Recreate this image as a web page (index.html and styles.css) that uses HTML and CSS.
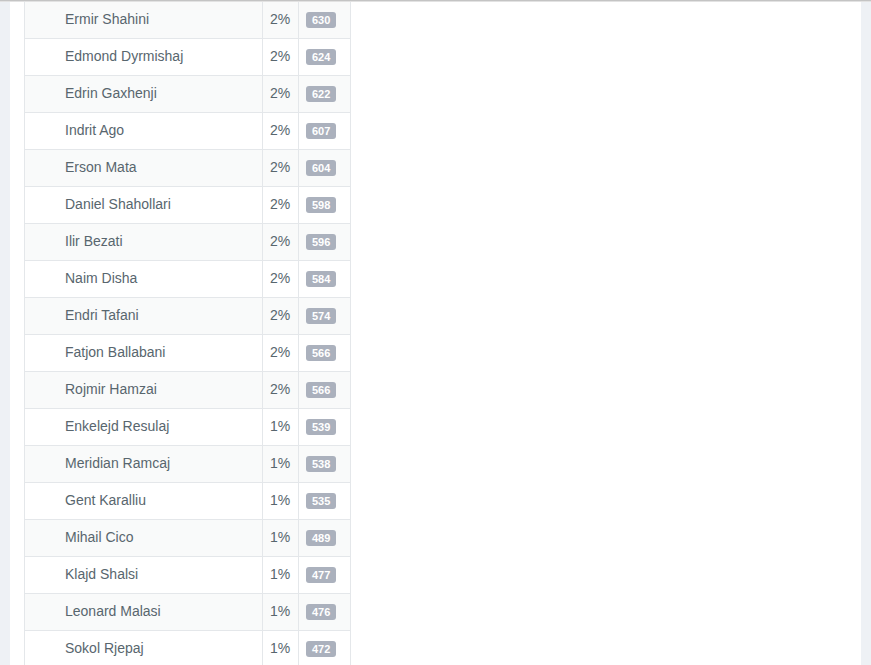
FILE: index.html
```html
<!DOCTYPE html>
<html>
<head>
<meta charset="utf-8">
<link rel="stylesheet" href="styles.css">
</head>
<body>
<div class="topline"></div>
<div class="page">
  <div class="panel">
    <table class="rank">
      <tbody>
        <tr><td class="name">Ermir Shahini</td><td class="pct">2%</td><td class="cnt"><span class="badge">630</span></td></tr>
        <tr><td class="name">Edmond Dyrmishaj</td><td class="pct">2%</td><td class="cnt"><span class="badge">624</span></td></tr>
        <tr><td class="name">Edrin Gaxhenji</td><td class="pct">2%</td><td class="cnt"><span class="badge">622</span></td></tr>
        <tr><td class="name">Indrit Ago</td><td class="pct">2%</td><td class="cnt"><span class="badge">607</span></td></tr>
        <tr><td class="name">Erson Mata</td><td class="pct">2%</td><td class="cnt"><span class="badge">604</span></td></tr>
        <tr><td class="name">Daniel Shahollari</td><td class="pct">2%</td><td class="cnt"><span class="badge">598</span></td></tr>
        <tr><td class="name">Ilir Bezati</td><td class="pct">2%</td><td class="cnt"><span class="badge">596</span></td></tr>
        <tr><td class="name">Naim Disha</td><td class="pct">2%</td><td class="cnt"><span class="badge">584</span></td></tr>
        <tr><td class="name">Endri Tafani</td><td class="pct">2%</td><td class="cnt"><span class="badge">574</span></td></tr>
        <tr><td class="name">Fatjon Ballabani</td><td class="pct">2%</td><td class="cnt"><span class="badge">566</span></td></tr>
        <tr><td class="name">Rojmir Hamzai</td><td class="pct">2%</td><td class="cnt"><span class="badge">566</span></td></tr>
        <tr><td class="name">Enkelejd Resulaj</td><td class="pct">1%</td><td class="cnt"><span class="badge">539</span></td></tr>
        <tr><td class="name">Meridian Ramcaj</td><td class="pct">1%</td><td class="cnt"><span class="badge">538</span></td></tr>
        <tr><td class="name">Gent Karalliu</td><td class="pct">1%</td><td class="cnt"><span class="badge">535</span></td></tr>
        <tr><td class="name">Mihail Cico</td><td class="pct">1%</td><td class="cnt"><span class="badge">489</span></td></tr>
        <tr><td class="name">Klajd Shalsi</td><td class="pct">1%</td><td class="cnt"><span class="badge">477</span></td></tr>
        <tr><td class="name">Leonard Malasi</td><td class="pct">1%</td><td class="cnt"><span class="badge">476</span></td></tr>
        <tr><td class="name">Sokol Rjepaj</td><td class="pct">1%</td><td class="cnt"><span class="badge">472</span></td></tr>
      </tbody>
    </table>
  </div>
</div>
</body>
</html>
```
FILE: styles.css
```css
html, body {
  margin: 0;
  padding: 0;
  background: #eef1f5;
  overflow: hidden;
  height: 665px;
}
body {
  font-family: "Liberation Sans", Arial, sans-serif;
  font-size: 14px;
  color: #58666e;
}
.topline {
  height: 1px;
  background: #c4c4c4;
  border-bottom: 1px solid #e2e2e2;
}
.page {
  padding: 0 10px;
}
.panel {
  background: #fff;
  padding: 0 14px;
  height: 700px;
}
.rank {
  border-collapse: collapse;
  border-left: 1px solid #e4e7ea;
  border-right: 1px solid #e4e7ea;
}
.rank td {
  border-left: 1px solid #e4e7ea;
  border-right: 1px solid #e4e7ea;
  border-bottom: 1px solid #e4e7ea;
  height: 37px;
  box-sizing: border-box;
  padding: 0 7px 2px 7px;
  line-height: 20px;
  vertical-align: middle;
}
.rank tr:first-child td {
  height: 36px;
}
.rank tr:nth-child(odd) td {
  background: #f9fafa;
}
.rank td.name {
  width: 238px;
  padding-left: 40px;
}
.rank td.pct {
  width: 36px;
}
.rank td.cnt {
  width: 52px;
  padding-bottom: 0;
}
.badge {
  display: inline-block;
  background: #abb1bd;
  color: #fff;
  font-size: 11px;
  font-weight: bold;
  line-height: 1;
  padding: 3px 6px 2px;
  border-radius: 3px;
  vertical-align: 1px;
}
```
